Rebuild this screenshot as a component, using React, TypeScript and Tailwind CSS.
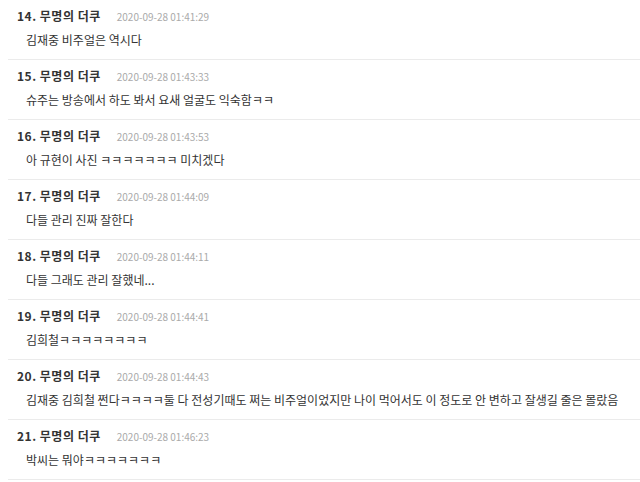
import React from 'react';

type Comment = { no: number; date: string; text: string };

const comments: Comment[] = [
    { no: 14, date: '2020-09-28 01:41:29', text: '김재중 비주얼은 역시다' },
    { no: 15, date: '2020-09-28 01:43:33', text: '슈주는 방송에서 하도 봐서 요새 얼굴도 익숙함ㅋㅋ' },
    { no: 16, date: '2020-09-28 01:43:53', text: '아 규현이 사진 ㅋㅋㅋㅋㅋㅋㅋ 미치겠다' },
    { no: 17, date: '2020-09-28 01:44:09', text: '다들 관리 진짜 잘한다' },
    { no: 18, date: '2020-09-28 01:44:11', text: '다들 그래도 관리 잘했네...' },
    { no: 19, date: '2020-09-28 01:44:41', text: '김희철ㅋㅋㅋㅋㅋㅋㅋㅋ' },
    {
        no: 20,
        date: '2020-09-28 01:44:43',
        text: '김재중 김희철 쩐다ㅋㅋㅋㅋ둘 다 전성기때도 쩌는 비주얼이었지만 나이 먹어서도 이 정도로 안 변하고 잘생길 줄은 몰랐음',
    },
    { no: 21, date: '2020-09-28 01:46:23', text: '박씨는 뭐야ㅋㅋㅋㅋㅋㅋㅋ' },
];

const CommentRow: React.FC<{ c: Comment }> = ({ c }) => (
    <div className="pt-2 pb-[11px] border-b border-[#ebebeb]">
        <div className="flex items-center h-4 pl-[9px]">
            <span className="text-[12px] font-bold tracking-[0.5px] text-[#333]">{c.no}. 무명의 더쿠</span>
            <span className="ml-[16px] text-[10px] text-[#aaa]">{c.date}</span>
        </div>
        <div className="mt-2 h-4 flex items-center pl-[18px] text-[12px] text-[#333] whitespace-nowrap">
            {c.text}
        </div>
    </div>
);

export default function App() {
    return (
        <div
            className="w-[640px] h-[482px] bg-white overflow-hidden pl-2"
            style={{ fontFamily: '"Noto Sans CJK KR", "Noto Sans", sans-serif' }}
        >
            {comments.map((c) => (
                <CommentRow key={c.no} c={c} />
            ))}
        </div>
    );
}
